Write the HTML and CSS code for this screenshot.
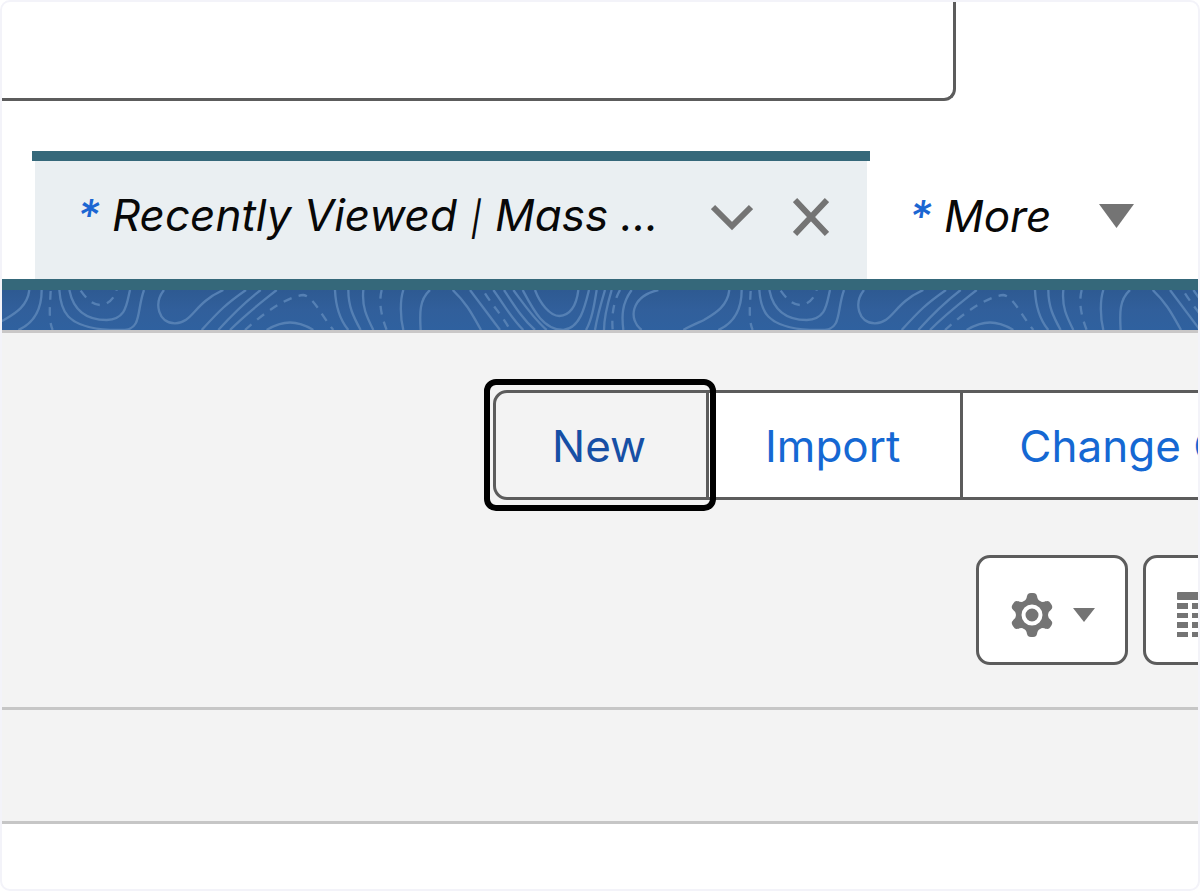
FILE: index.html
```html
<!DOCTYPE html>
<html lang="en">
<head>
<meta charset="utf-8">
<title>Recently Viewed</title>
<link rel="stylesheet" href="styles.css">
</head>
<body>
<div class="frame">
  <header class="top">
    <div class="search-box"></div>
  </header>
  <nav class="tabs">
    <div class="tab tab-active">
      <a class="tab-link" href="#"><span class="star">*</span><span>Recently Viewed <span class="bar">|</span> Mass ...</span></a>
      <button class="icon-btn" type="button" aria-label="Tab actions">
        <svg width="42" height="42" viewBox="0 0 42 42"><path d="M2 11 L21 30 L40 11" fill="none" stroke="#747474" stroke-width="6"/></svg>
      </button>
      <button class="icon-btn" type="button" aria-label="Close tab">
        <svg width="36" height="42" viewBox="0 0 36 42"><path d="M2 4 L34 38 M34 4 L2 38" fill="none" stroke="#747474" stroke-width="6"/></svg>
      </button>
    </div>
    <button class="tab tab-more" type="button">
      <span class="star">*</span><span>More</span>
      <svg class="more-arrow" width="36" height="26" viewBox="0 0 36 26"><path d="M0 1 H35 L17.500 25 Z" fill="#747474"/></svg>
    </button>
  </nav>
  <div class="banner">
    <svg class="contours" viewBox="6 0 3588 120" preserveAspectRatio="xMinYMin slice" aria-hidden="true">
      <defs>
        <g id="tile">
          <path d="M88 0 C82 50 45 70 12 90 C-10 100 -30 108 -50 120"/>
          <path d="M125 0 C125 60 100 100 55 120"/>
          <path class="dash" d="M152 3 C150 50 145 90 158 120"/>
          <path d="M178 0 C182 60 195 112 330 120 H375 C425 115 410 60 432 0"/>
          <path d="M208 0 C220 60 260 90 320 90 C380 88 380 40 390 0"/>
          <path class="dash" d="M242 2 C262 30 280 45 302 45 C330 42 345 20 350 0"/>
          <path d="M492 0 C460 40 475 100 525 100 C580 98 580 40 670 0"/>
          <path d="M738 0 C680 40 660 60 605 120"/>
          <path d="M782 0 C730 40 700 70 655 120"/>
          <path d="M830 0 C780 40 740 70 690 120"/>
          <path class="dash" d="M735 120 C790 70 860 20 910 15 C940 20 960 70 1000 120"/>
          <path d="M800 120 C850 90 890 90 940 120"/>
          <path d="M1005 0 C1007 50 1020 90 1045 120"/>
          <path d="M1045 0 C1045 50 1060 80 1082 120"/>
          <path d="M1090 0 C1085 50 1100 80 1120 120"/>
          <path class="dash" d="M1145 0 C1135 40 1145 80 1160 120"/>
          <path d="M1210 0 C1200 30 1200 80 1210 120"/>
          <path d="M1290 0 C1255 30 1260 80 1262 120"/>
          <path d="M1358 0 C1400 40 1415 70 1443 120"/>
          <path d="M1410 0 C1440 40 1470 80 1500 120"/>
          <path class="dash" d="M1455 10 C1480 50 1510 80 1530 120"/>
          <path d="M1480 0 C1510 40 1530 80 1570 120"/>
          <path d="M1512 0 C1545 50 1570 90 1605 120"/>
          <path d="M1540 0 C1570 40 1600 85 1640 120"/>
          <path d="M1568 0 C1600 60 1630 120 1690 120 C1740 115 1755 50 1767 0"/>
          <path d="M1605 0 C1620 40 1650 78 1678 78 C1715 75 1730 40 1735 0"/>
          <path d="M1790 0 C1782 50 1775 90 1758 120"/>
          <path d="M1815 0 C1800 50 1790 90 1785 120"/>
          <path d="M1835 0 C1820 50 1812 90 1812 120"/>
          <path class="dash" d="M1860 0 C1838 40 1835 80 1838 120"/>
          <path d="M1895 0 C1865 40 1865 80 1870 120"/>
          <path d="M1975 0 C1890 20 1885 90 1925 120"/>
        </g>
      </defs>
      <use href="#tile"/>
      <use href="#tile" x="2100"/>
    </svg>
  </div>
  <main class="list-header">
    <div class="actions">
      <button class="action action-focus" type="button">New</button>
      <button class="action" type="button">Import</button>
      <button class="action" type="button">Change Owner</button>
    </div>
    <div class="tools">
      <button class="tool" type="button" aria-label="List view controls">
        <svg width="46" height="46" viewBox="0 0 46 46">
          <g fill="#747474">
            <circle cx="23" cy="23" r="15.500"/>
            <g id="tooth"><rect x="18" y="1" width="10" height="44" rx="4"/><path d="M18 4 q-.5 4 -3 5 v28 q2.500 1 3 5 h10 q.5 -4 3 -5 v-28 q-2.500 -1 -3 -5 z"/></g>
            <use href="#tooth" transform="rotate(60 23 23)"/>
            <use href="#tooth" transform="rotate(120 23 23)"/>
          </g>
          <circle cx="23" cy="23" r="8.500" fill="#747474" stroke="#fff" stroke-width="4"/>
        </svg>
        <svg width="22" height="14" viewBox="0 0 22 14"><path d="M0 0 H22 L11 14 Z" fill="#747474"/></svg>
      </button>
      <button class="tool" type="button" aria-label="Display as table">
        <svg width="46" height="46" viewBox="0 0 46 46" fill="#747474">
          <rect x="1" y="0" width="45" height="8" rx="1"/>
          <path d="M1 11h11v6H1z M16 11h13v6H16z M33 11h13v6H33z M1 21h11v5H1z M16 21h13v5H16z M33 21h13v5H33z M1 30h11v6H1z M16 30h13v6H16z M33 30h13v6H33z M1 40h11v5H1z M16 40h13v5H16z M33 40h13v5H33z"/>
        </svg>
      </button>
    </div>
  </main>
  <div class="column-row"></div>
</div>
</body>
</html>
```

FILE: styles.css
```css
* { box-sizing: border-box; }

body {
  margin: 0;
  background: #fff;
  font-family: Inter, "Liberation Sans", sans-serif;
  font-size: 44px;
  line-height: 56px;
  color: #080808;
}

button {
  font: inherit;
  color: inherit;
  padding: 0;
  border: 0;
  background: none;
}

svg { display: block; flex: none; }

.frame {
  min-height: 100vh;
  border: 2px solid #f3f3f9;
  border-radius: 10px;
  overflow: hidden;
}

.top { padding-right: 20.200%; }

.search-box {
  height: 99px;
  border: solid #5c5c5c;
  border-width: 0 3px 3px 0;
  border-bottom-right-radius: 12px;
}

.tabs {
  display: flex;
  padding: 50px 0 0 30px;
  font-style: italic;
}

.tab { display: flex; align-items: center; white-space: nowrap; }

.tab-active {
  width: 838px;
  height: 128px;
  padding: 0 41px 6px 45px;
  border-top: 10px solid #35687a;
  background: linear-gradient(#eaeff2, #eaeff2) center / calc(100% - 6px) 100% no-repeat;
}

.tab-link {
  display: flex;
  flex: 1;
  gap: 12px;
  color: inherit;
  text-decoration: none;
}

.star { color: #1b66d2; font-weight: 500; }

.bar { margin: 0 1px; font-size: 34px; }

.tab-active .icon-btn + .icon-btn { margin-left: 40px; }

.tab-more { gap: 12px; padding: 2px 0 0 39px; }

.more-arrow { margin-left: 36px; }

.banner {
  border-top: 11px solid #35687a;
  border-bottom: 3px solid #c9c7c7;
  background: linear-gradient(#2e5a92, #315f9b 50%, #2f619f);
}

.contours { width: 100%; height: 40px; }

.contours path {
  fill: none;
  stroke: #5580b4;
  stroke-width: 7;
}

.contours .dash { stroke-dasharray: 26 22; }

.list-header {
  background: #f3f3f3;
  border-bottom: 3px solid #c6c6c6;
  padding: 57px 0 42px;
}

.actions { display: flex; padding-left: 491px; }

.action {
  position: relative;
  flex: none;
  height: 110px;
  padding: 2px 60px 0 56px;
  border: 3px solid #5c5c5c;
  border-left-width: 0;
  background: #fff;
  color: #1568d3;
}

.action-focus {
  z-index: 1;
  border-left-width: 3px;
  border-radius: 14px 0 0 14px;
  background: #f3f3f3;
  color: #164fa5;
}

.action-focus::after {
  content: "";
  position: absolute;
  inset: -14px -10px -14px -12px;
  border: 6px solid #000;
  border-radius: 12px;
}

.tools {
  display: flex;
  gap: 15px;
  padding: 55px 0 0 974px;
}

.tool {
  display: flex;
  flex: none;
  align-items: center;
  gap: 18px;
  height: 110px;
  padding: 10px 30px 0;
  border: 3px solid #5c5c5c;
  border-radius: 14px;
  background: #fff;
}

.column-row {
  height: 114px;
  background: #f3f3f3;
  border-bottom: 3px solid #c6c6c6;
}
```
